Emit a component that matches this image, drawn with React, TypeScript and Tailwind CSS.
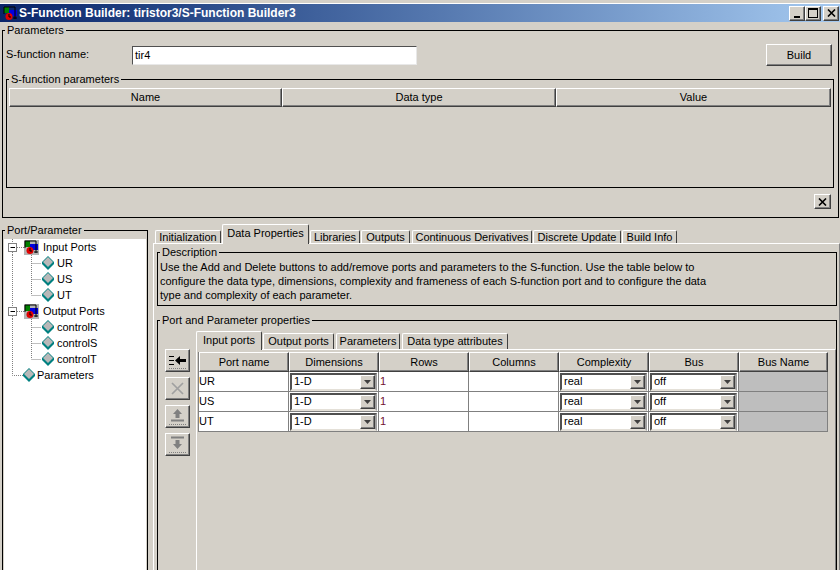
import type { ReactNode } from 'react'

const raised = 'border border-t-white border-l-white border-r-[#404040] border-b-[#404040] shadow-[inset_-1px_-1px_0_#808080] bg-[#d4d0c8]'
const font = 'font-["Liberation_Sans",sans-serif]'

function Group({ title, className, children }: { title: string; className?: string; children: ReactNode }) {
  return (
    <fieldset className={`border border-black min-w-0 ${className ?? ''}`}>
      <legend className="ml-[2px] px-[2px] h-[13px] leading-[13px]">{title}</legend>
      {children}
    </fieldset>
  )
}

function ModelIcon({ box }: { box?: boolean }) {
  return (
    <svg width="15" height="15" viewBox="0 0 15 15" className="block shrink-0">
      {box && <rect width="15" height="15" fill="#b4b4b4" />}
      <path d="M1 1 L6 1 L6 7 L1 7Z" fill="#008000" />
      <rect x="6" y="4" width="8" height="6" fill="#0000e0" />
      <path d="M1 1 V8 M1 1 H12 V13 M10 12 H14" stroke="#000" fill="none" />
      <circle cx="6" cy="10.5" r="3.5" fill="#e00000" />
      <path d="M6 8 V11 H8" stroke="#000" fill="none" />
    </svg>
  )
}

function Diamond({ x, y }: { x: number; y: number }) {
  return (
    <g>
      <polygon points={`${x},${y - 7} ${x + 6},${y - 1} ${x + 6},${y + 1} ${x},${y + 7} ${x - 6},${y + 1} ${x - 6},${y - 1}`} fill="#008080" />
      <polygon points={`${x},${y - 6} ${x + 5},${y - 1} ${x},${y + 4} ${x - 5},${y - 1}`} fill="#b8b8b8" />
    </g>
  )
}

type TreeKind = 'group' | 'port' | 'lastPort' | 'param'

function TreeRow({ kind, label }: { kind: TreeKind; label: string }) {
  const dots = { stroke: '#808080', strokeDasharray: '1 1', fill: 'none' }
  return (
    <div className="flex items-center h-4">
      <svg width="52" height="16" viewBox="0 0 52 16" className={`block shrink-0 ${kind === 'param' ? '-mr-[20px]' : ''}`}>
        {kind === 'group' && (
          <g>
            <path d="M8.5 13 V16 M8.5 0 V3" {...dots} />
            <path d="M13 8.5 H20" {...dots} />
            <rect x="4.5" y="4.5" width="8" height="8" fill="#fff" stroke="#808080" />
            <path d="M6.5 8.5 H11" stroke="#000" />
          </g>
        )}
        {(kind === 'port' || kind === 'lastPort') && (
          <g>
            <path d="M8.5 0 V16" {...dots} />
            <path d={kind === 'port' ? 'M27.5 0 V16' : 'M27.5 0 V8'} {...dots} />
            <path d="M27.5 8.5 H37" {...dots} />
            <Diamond x={44} y={8} />
          </g>
        )}
        {kind === 'param' && (
          <g>
            <path d="M8.5 0 V8.5 H19" {...dots} />
            <Diamond x={25} y={8} />
          </g>
        )}
      </svg>
      {kind === 'group' && (
        <div className="-ml-[32px] mr-[3px]">
          <ModelIcon box />
        </div>
      )}
      <span className="ml-[1px]">{label}</span>
    </div>
  )
}

function Tab({ label, active, className }: { label: string; active?: boolean; className: string }) {
  return (
    <div
      className={`flex items-center justify-center whitespace-nowrap border-l border-t border-r border-l-white border-t-white border-r-[#404040] rounded-t-[2px] bg-[#d4d0c8] ${className} ${active ? 'relative -mb-px z-10' : ''}`}
    >
      {label}
    </div>
  )
}

function Combo({ value }: { value: string }) {
  return (
    <div className="flex items-center h-[18px] mx-px border-2 border-t-[#505050] border-l-[#505050] border-r-[#a0a0a0] border-b-[#e4e0d8] bg-white">
      <span className="flex-1 pl-[2px] leading-none">{value}</span>
      <div className={`${raised} w-[15px] h-[14px] flex items-center justify-center shrink-0`}>
        <svg width="7" height="4" viewBox="0 0 7 4" className="block">
          <path d="M0 0 H7 L3.5 4Z" fill="#404040" />
        </svg>
      </div>
    </div>
  )
}

function ToolButton({ children }: { children: ReactNode }) {
  return (
    <div className={`${raised} w-[25px] h-[23px] flex items-center justify-center`}>
      <svg width="21" height="19" viewBox="0 0 21 19" className="block">
        {children}
      </svg>
    </div>
  )
}

const ports = ['UR', 'US', 'UT']
const headers = ['Port name', 'Dimensions', 'Rows', 'Columns', 'Complexity', 'Bus', 'Bus Name']
const rowCell = 'h-5 border-r border-b border-[#808080] bg-white flex items-center'

export default function App() {
  return (
    <div className={`w-[840px] h-[570px] overflow-hidden bg-[#d4d0c8] text-black text-[11px] ${font}`}>
      <div className="h-1 border-t border-b border-t-[#d4d0c8] border-b-white" />
      {/* Title bar */}
      <div className="h-[18px] flex items-center bg-gradient-to-r from-[#0a246a] to-[#a6caf0] pl-[3px] pr-px">
        <ModelIcon />
        <span className="ml-[1px] text-white font-bold text-[12px]">S-Function Builder: tiristor3/S-Function Builder3</span>
        <div className="ml-auto flex items-center">
          <div className={`${raised} w-4 h-[15px] flex items-end justify-center pb-[2px]`}>
            <div className="w-[6px] h-[2px] bg-black" />
          </div>
          <div className={`${raised} w-4 h-[15px] flex items-center justify-center`}>
            <div className="w-[10px] h-[10px] border border-t-2 border-black" />
          </div>
          <div className={`${raised} w-4 h-[15px] ml-[2px] flex items-center justify-center`}>
            <svg width="9" height="8" viewBox="0 0 9 8" className="block">
              <path d="M1 0.5 L8 7.5 M8 0.5 L1 7.5" stroke="#000" strokeWidth="1.6" />
            </svg>
          </div>
        </div>
      </div>

      {/* Parameters */}
      <Group title="Parameters" className="mt-[2px] ml-[2px] w-[837px] h-[194px]">
        <div className="flex items-center h-[22px] mt-[7px] pl-[3px] pr-[6px]">
          <span className="w-[126px] -mt-[2px]">S-function name:</span>
          <div className="w-[285px] h-[19px] border border-t-[#505050] border-l-[#505050] border-r-[#e8e8e8] border-b-[#e8e8e8] bg-white flex items-center pl-[2px]">
            tir4
          </div>
          <button className={`${raised} ml-auto w-[66px] h-[22px]`}>Build</button>
        </div>
        <Group title="S-function parameters" className="mt-[7px] ml-[3px] w-[828px] h-[115px]">
          <div className="grid grid-cols-[273px_274px_275px] mt-[2px] ml-[2px] h-[19px]">
            <div className={`${raised} flex items-center justify-center`}>Name</div>
            <div className={`${raised} flex items-center justify-center`}>Data type</div>
            <div className={`${raised} flex items-center justify-center`}>Value</div>
          </div>
        </Group>
        <div className="flex justify-end mt-[6px] pr-[7px]">
          <div className={`${raised} w-[17px] h-[15px] flex items-center justify-center`}>
            <svg width="9" height="8" viewBox="0 0 9 8" className="block">
              <path d="M1 0.5 L8 7.5 M8 0.5 L1 7.5" stroke="#000" strokeWidth="1.6" />
            </svg>
          </div>
        </div>
      </Group>

      <div className="flex pt-[6px] ml-[2px]">
        {/* Port tree */}
        <Group title="Port/Parameter" className="w-[146px] h-[360px] shrink-0">
          <div className="mx-px mt-[2px] h-[340px] bg-white">
            <TreeRow kind="group" label="Input Ports" />
            <TreeRow kind="port" label="UR" />
            <TreeRow kind="port" label="US" />
            <TreeRow kind="lastPort" label="UT" />
            <TreeRow kind="group" label="Output Ports" />
            <TreeRow kind="port" label="controlR" />
            <TreeRow kind="port" label="controlS" />
            <TreeRow kind="lastPort" label="controlT" />
            <TreeRow kind="param" label="Parameters" />
          </div>
        </Group>

        {/* Tabbed pane */}
        <div className="ml-[5px] flex-1 min-w-0">
          <div className="flex items-end h-[19px] pl-[2px] gap-px">
            <Tab label="Initialization" className="w-[66px] h-[13px]" />
            <Tab label="Data Properties" active className="w-[87px] h-[20px] pb-[2px]" />
            <Tab label="Libraries" className="w-[50px] h-[13px]" />
            <Tab label="Outputs" className="w-[49px] h-[13px]" />
            <Tab label="Continuous Derivatives" className="w-[120px] h-[13px] ml-px" />
            <Tab label="Discrete Update" className="w-[88px] h-[13px]" />
            <Tab label="Build Info" className="w-[55px] h-[13px]" />
          </div>
          <div className="border-t border-l border-r border-t-white border-l-white border-r-[#808080] h-[340px] pl-[3px] pr-[2px]">
            <Group title="Description" className="mt-[2px] w-[680px] h-[60px]">
              <p className="pl-[2px] pt-px leading-[14px]">
                Use the Add and Delete buttons to add/remove ports and parameters to the S-function. Use the table below to
                <br />
                configure the data type, dimensions, complexity and frameness of each S-function port and to configure the data
                <br />
                type and complexity of each parameter.
              </p>
            </Group>
            <Group title="Port and Parameter properties" className="mt-[8px] w-[680px] h-[300px]">
              <div className="flex pt-[3px]">
                <div className="w-[38px] pl-[7px] pt-[19px] flex flex-col gap-[5px] shrink-0">
                  <ToolButton>
                    <path d="M2 5.5 H7 M2 9.5 H7 M2 13.5 H7" stroke="#000" />
                    <path d="M8 9.5 L13 5 V8 H19 V11 H13 V14Z" fill="#000" />
                    <path d="M2 17.5 H19" stroke="#808080" strokeDasharray="1 1" />
                  </ToolButton>
                  <ToolButton>
                    <path d="M5 4 L16 15 M16 4 L5 15" stroke="#a0a0a0" strokeWidth="1.7" />
                  </ToolButton>
                  <ToolButton>
                    <path d="M10.5 2 L15 7 H12.5 V11 H8.5 V7 H6Z" fill="#808080" />
                    <path d="M4 13.5 H17" stroke="#808080" strokeWidth="2" />
                    <path d="M2 17.5 H19" stroke="#808080" strokeDasharray="1 1" />
                  </ToolButton>
                  <ToolButton>
                    <path d="M4 2.5 H17" stroke="#808080" strokeWidth="2" />
                    <path d="M10.5 14 L15 9 H12.5 V5 H8.5 V9 H6Z" fill="#808080" />
                    <path d="M2 17.5 H19" stroke="#808080" strokeDasharray="1 1" />
                  </ToolButton>
                </div>
                <div className="flex-1 min-w-0">
                  <div className="flex items-end h-[19px] gap-px">
                    <Tab label="Input ports" active className="w-[66px] h-[19px] pb-[2px]" />
                    <Tab label="Output ports" className="w-[71px] h-[16px]" />
                    <Tab label="Parameters" className="w-[64px] h-[16px] ml-px" />
                    <Tab label="Data type attributes" className="w-[106px] h-[16px] ml-px" />
                  </div>
                  <div className="border-t border-l border-r border-t-white border-l-white border-r-[#808080] h-[230px] pl-px pt-[2px] pr-[4px]">
                    <div className="border-l border-[#808080] grid grid-cols-[90px_90px_90px_90px_90px_90px_89px]">
                      {headers.map((h) => (
                        <div key={h} className={`${raised} h-[20px] flex items-center justify-center`}>{h}</div>
                      ))}
                      {ports.map((p) => (
                        <div key={p} className="contents">
                          <div className={rowCell}>{p}</div>
                          <div className={rowCell}><div className="w-full"><Combo value="1-D" /></div></div>
                          <div className={`${rowCell} pl-px text-[#701030]`}>1</div>
                          <div className={rowCell} />
                          <div className={rowCell}><div className="w-full"><Combo value="real" /></div></div>
                          <div className={rowCell}><div className="w-full"><Combo value="off" /></div></div>
                          <div className="h-5 border-r border-b border-[#808080] bg-[#bebebe]" />
                        </div>
                      ))}
                    </div>
                  </div>
                </div>
              </div>
            </Group>
          </div>
        </div>
      </div>
    </div>
  )
}
